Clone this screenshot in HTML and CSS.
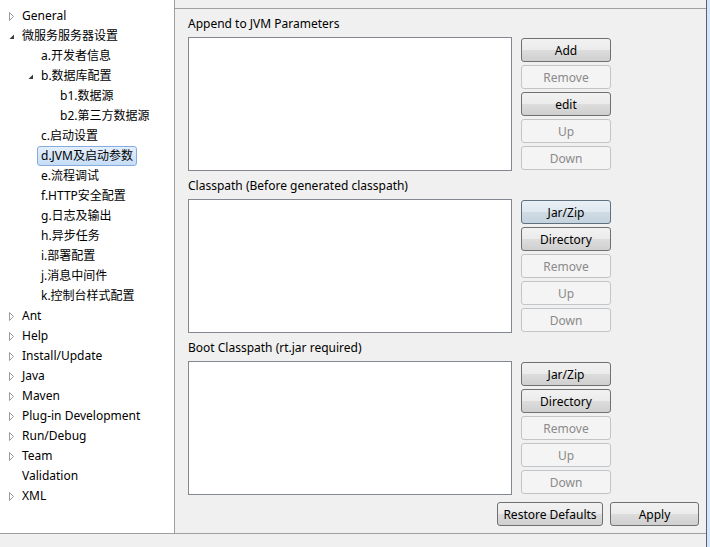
FILE: index.html
```html
<!DOCTYPE html>
<html>
<head>
<meta charset="utf-8">
<link rel="stylesheet" href="styles.css">
</head>
<body>
<div class="window">
  <div class="inner">
    <div class="main">
      <div class="tree">
        <div class="row"><span class="tog"><svg width="6" height="9" viewBox="0 0 6 9"><path d="M0.5 0.5 L4.5 4.5 L0.5 8.5 Z" fill="#fff" stroke="#9a9a9a"/></svg></span><span class="lbl">General</span></div>
        <div class="row"><span class="tog"><svg width="6" height="6" viewBox="0 0 6 6"><path d="M5 0.5 L5 5 L0.5 5 Z" fill="#3c3c3c"/></svg></span><span class="lbl">微服务服务器设置</span></div>
        <div class="row l1"><span class="tog"></span><span class="lbl">a.开发者信息</span></div>
        <div class="row l1"><span class="tog"><svg width="6" height="6" viewBox="0 0 6 6"><path d="M5 0.5 L5 5 L0.5 5 Z" fill="#3c3c3c"/></svg></span><span class="lbl">b.数据库配置</span></div>
        <div class="row l2"><span class="tog"></span><span class="lbl">b1.数据源</span></div>
        <div class="row l2"><span class="tog"></span><span class="lbl">b2.第三方数据源</span></div>
        <div class="row l1"><span class="tog"></span><span class="lbl">c.启动设置</span></div>
        <div class="row l1"><span class="tog"></span><span class="lbl sel">d.JVM及启动参数</span></div>
        <div class="row l1"><span class="tog"></span><span class="lbl">e.流程调试</span></div>
        <div class="row l1"><span class="tog"></span><span class="lbl">f.HTTP安全配置</span></div>
        <div class="row l1"><span class="tog"></span><span class="lbl">g.日志及输出</span></div>
        <div class="row l1"><span class="tog"></span><span class="lbl">h.异步任务</span></div>
        <div class="row l1"><span class="tog"></span><span class="lbl">i.部署配置</span></div>
        <div class="row l1"><span class="tog"></span><span class="lbl">j.消息中间件</span></div>
        <div class="row l1"><span class="tog"></span><span class="lbl">k.控制台样式配置</span></div>
        <div class="row"><span class="tog"><svg width="6" height="9" viewBox="0 0 6 9"><path d="M0.5 0.5 L4.5 4.5 L0.5 8.5 Z" fill="#fff" stroke="#9a9a9a"/></svg></span><span class="lbl">Ant</span></div>
        <div class="row"><span class="tog"><svg width="6" height="9" viewBox="0 0 6 9"><path d="M0.5 0.5 L4.5 4.5 L0.5 8.5 Z" fill="#fff" stroke="#9a9a9a"/></svg></span><span class="lbl">Help</span></div>
        <div class="row"><span class="tog"><svg width="6" height="9" viewBox="0 0 6 9"><path d="M0.5 0.5 L4.5 4.5 L0.5 8.5 Z" fill="#fff" stroke="#9a9a9a"/></svg></span><span class="lbl">Install/Update</span></div>
        <div class="row"><span class="tog"><svg width="6" height="9" viewBox="0 0 6 9"><path d="M0.5 0.5 L4.5 4.5 L0.5 8.5 Z" fill="#fff" stroke="#9a9a9a"/></svg></span><span class="lbl">Java</span></div>
        <div class="row"><span class="tog"><svg width="6" height="9" viewBox="0 0 6 9"><path d="M0.5 0.5 L4.5 4.5 L0.5 8.5 Z" fill="#fff" stroke="#9a9a9a"/></svg></span><span class="lbl">Maven</span></div>
        <div class="row"><span class="tog"><svg width="6" height="9" viewBox="0 0 6 9"><path d="M0.5 0.5 L4.5 4.5 L0.5 8.5 Z" fill="#fff" stroke="#9a9a9a"/></svg></span><span class="lbl">Plug-in Development</span></div>
        <div class="row"><span class="tog"><svg width="6" height="9" viewBox="0 0 6 9"><path d="M0.5 0.5 L4.5 4.5 L0.5 8.5 Z" fill="#fff" stroke="#9a9a9a"/></svg></span><span class="lbl">Run/Debug</span></div>
        <div class="row"><span class="tog"><svg width="6" height="9" viewBox="0 0 6 9"><path d="M0.5 0.5 L4.5 4.5 L0.5 8.5 Z" fill="#fff" stroke="#9a9a9a"/></svg></span><span class="lbl">Team</span></div>
        <div class="row"><span class="tog"></span><span class="lbl">Validation</span></div>
        <div class="row"><span class="tog"><svg width="6" height="9" viewBox="0 0 6 9"><path d="M0.5 0.5 L4.5 4.5 L0.5 8.5 Z" fill="#fff" stroke="#9a9a9a"/></svg></span><span class="lbl">XML</span></div>
      </div>
      <div class="page">
        <div class="topbar"></div>
        <div class="content">
          <div class="section">
            <div class="title">Append to JVM Parameters</div>
            <div class="body">
              <div class="list"></div>
              <div class="btns">
                <div class="btn">Add</div>
                <div class="btn dis">Remove</div>
                <div class="btn">edit</div>
                <div class="btn dis">Up</div>
                <div class="btn dis">Down</div>
              </div>
            </div>
          </div>
          <div class="section">
            <div class="title">Classpath (Before generated classpath)</div>
            <div class="body">
              <div class="list"></div>
              <div class="btns">
                <div class="btn hot">Jar/Zip</div>
                <div class="btn">Directory</div>
                <div class="btn dis">Remove</div>
                <div class="btn dis">Up</div>
                <div class="btn dis">Down</div>
              </div>
            </div>
          </div>
          <div class="section">
            <div class="title">Boot Classpath (rt.jar required)</div>
            <div class="body">
              <div class="list"></div>
              <div class="btns">
                <div class="btn">Jar/Zip</div>
                <div class="btn">Directory</div>
                <div class="btn dis">Remove</div>
                <div class="btn dis">Up</div>
                <div class="btn dis">Down</div>
              </div>
            </div>
          </div>
          <div class="footer">
            <div class="btn restore">Restore Defaults</div>
            <div class="btn apply">Apply</div>
          </div>
        </div>
      </div>
    </div>
    <div class="status"></div>
  </div>
  <div class="frame"></div>
</div>
</body>
</html>
```

FILE: styles.css
```css
html, body {
  margin: 0;
  padding: 0;
}
body {
  font-family: "Noto Sans", "Noto Sans CJK SC", sans-serif;
  font-size: 12px;
  color: #000;
  background: #f0f0f0;
}
.window {
  display: flex;
  width: 710px;
  height: 547px;
  overflow: hidden;
}
.inner {
  width: 706px;
  display: flex;
  flex-direction: column;
}
.frame {
  width: 3px;
  border-left: 1px solid #59636e;
  background: #d3e5fa;
}
.main {
  height: 533px;
  border-bottom: 1px solid #a0a0a0;
  display: flex;
}
.status {
  flex: 1;
  background: #f0f0f0;
}
.tree {
  width: 174px;
  border-right: 1px solid #a0a0a0;
  background: #fff;
  padding-top: 6px;
  box-sizing: content-box;
}
.row {
  display: flex;
  align-items: center;
  height: 20px;
  white-space: nowrap;
}
.row.l1 { padding-left: 19px; }
.row.l2 { padding-left: 38px; }
.tog {
  width: 18px;
  height: 20px;
  display: flex;
  align-items: center;
  padding-left: 9px;
  box-sizing: border-box;
}
.tog svg { display: block; margin-top: 1px; }
.lbl {
  padding: 0 3px;
  border: 1px solid transparent;
  border-radius: 3px;
  line-height: 18px;
}
.lbl.sel {
  border-color: #84acdd;
  background: linear-gradient(#e4effc, #c6ddf7);
}
.page {
  flex: 1;
  display: flex;
  flex-direction: column;
  background: #f0f0f0;
}
.topbar {
  height: 8px;
  border-bottom: 1px solid #a0a0a0;
}
.content {
  padding-left: 13px;
  display: flex;
  flex-direction: column;
}
.title {
  padding-top: 1px;
  line-height: 27px;
  height: 27px;
  white-space: nowrap;
}
.body {
  display: flex;
  gap: 9px;
}
.list {
  width: 322px;
  height: 132px;
  border: 1px solid #828790;
  background: #fff;
}
.btns {
  display: flex;
  flex-direction: column;
  gap: 3px;
  padding-top: 1px;
}
.btn {
  width: 90px;
  height: 24px;
  box-sizing: border-box;
  border: 1px solid #707070;
  border-radius: 3px;
  background: linear-gradient(#f2f2f2 0%, #ebebeb 50%, #dddddd 50%, #cfcfcf 100%);
  display: flex;
  align-items: center;
  justify-content: center;
  white-space: nowrap;
}
.btn.dis {
  border-color: #c2c5c8;
  background: #f4f4f4;
  color: #8a8a8a;
}
.btn.hot {
  border-color: #5f7080;
  background: linear-gradient(#e9f0f6 0%, #dfe8ef 50%, #cfdbe5 50%, #c5d3de 100%);
}
.footer {
  display: flex;
  justify-content: flex-end;
  gap: 7px;
  margin-top: 7px;
  padding-right: 7px;
}
.btn.restore { width: 106px; }
.btn.apply { width: 89px; }
```
